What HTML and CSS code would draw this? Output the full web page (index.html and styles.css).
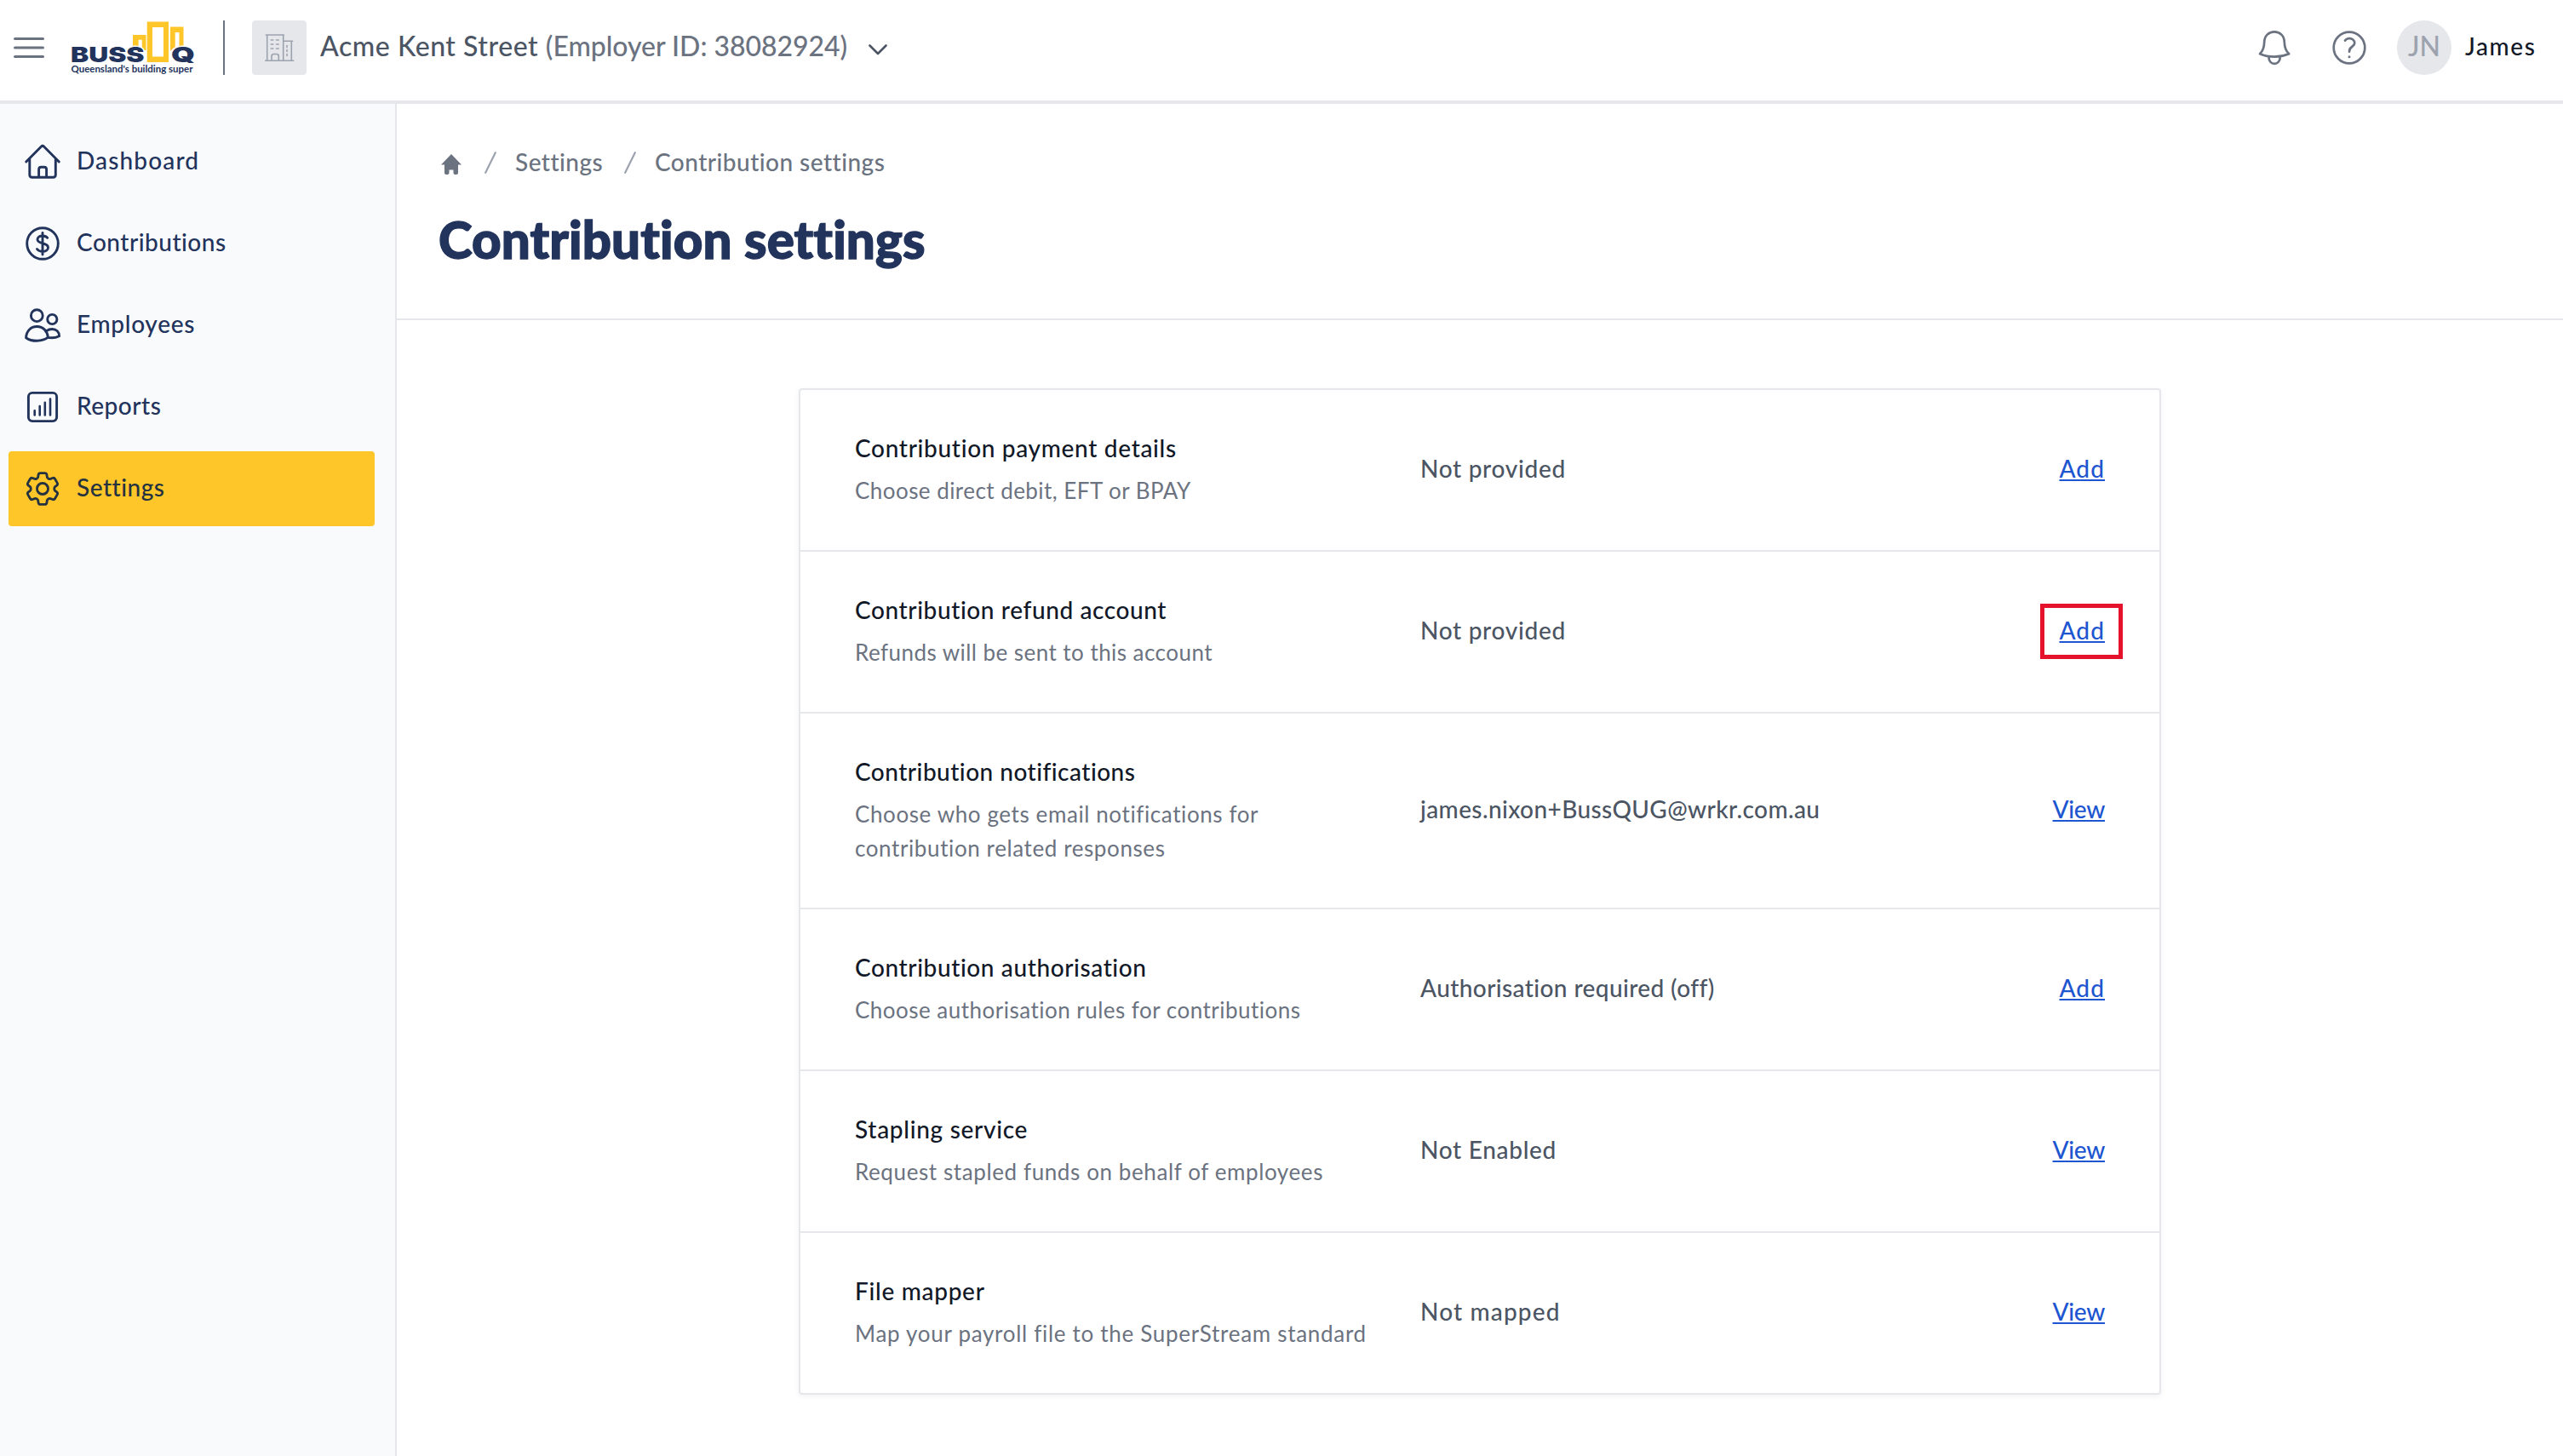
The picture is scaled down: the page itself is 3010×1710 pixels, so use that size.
FILE: index.html
```
<!DOCTYPE html>
<html lang="en">
<head>
<meta charset="utf-8">
<title>Contribution settings</title>
<link rel="stylesheet" href="styles.css">
</head>
<body>
<header class="topbar">
  <svg class="menu-icon" viewBox="0 0 36 24"><path d="M1.5 1.5h33M1.5 12h33M1.5 22.5h33"/></svg>
  <svg class="logo" viewBox="0 0 150 68" role="img" aria-label="BUSSQ">
    <path class="logo-gold" fill-rule="evenodd" d="M74 17h15.500v18h-4.700v-12.300h-4.200v12.300h-6.600zM118 7.500h15.500v28h-5v-21.500h-4.800v21.500h-5.700z"/>
    <path class="logo-gold" fill-rule="evenodd" d="M90.700 1.500h25.300v47.500h-25.300zM97 8v34.500h13v-34.500z"/>
    <text class="logo-name" x="1" y="48.500" textLength="86.500" lengthAdjust="spacingAndGlyphs">BUSS</text>
    <text class="logo-name" x="119" y="48.500" textLength="28" lengthAdjust="spacingAndGlyphs">Q</text>
    <text class="logo-tag" x="1.500" y="60.500" textLength="143" lengthAdjust="spacingAndGlyphs">Queensland's building super</text>
  </svg>
  <span class="divider"></span>
  <span class="company-icon">
    <svg viewBox="0 0 64 64"><path d="M16.300 17h21M17.700 17v30M36.700 17v30M36.700 24.300h11M46.300 24.300v22.700M15.700 47.200h33M23 47v-5q0-2.500 2.500-2.500h3.300q2.500 0 2.500 2.500v5"/><path class="windows" d="M22.200 23h2.600M28.600 23h2.600M22.200 28h2.600M28.600 28h2.600M22.200 33h2.600M28.600 33h2.600M41 29.500v2M41 34.500v2M41 39.500v2"/></svg>
  </span>
  <span class="company"><span class="company-name">Acme Kent Street</span> <span class="company-id">(Employer ID: 38082924)</span></span>
  <svg class="chevron" viewBox="0 0 22 13"><path d="M1.500 1.500l9.500 9.500 9.500-9.500"/></svg>
  <div class="tools">
    <svg class="tool" viewBox="0 0 48 48"><path d="M7 31.300Q12 26.500 12.200 17.500C12.300 10 17.500 5.400 24 5.400S35.700 10 35.800 17.500Q36 26.500 41.200 31.300Q33 34.700 24 34.700T7 31.300zM17.600 34.500V36.300A6.500 6.500 0 0 0 30.600 36.300V34.500"/></svg>
    <svg class="tool tool-help" viewBox="0 0 48 48"><circle cx="24" cy="24" r="18.300"/><path d="M19 15.600C21 12.800 25.500 12.200 28.300 14.500C31 16.800 30.800 20 28.300 21.900C25.500 24 24 25 24 28.700"/><circle class="dot" cx="24" cy="34.700" r="1.500"/></svg>
    <span class="avatar">JN</span>
    <span class="user">James</span>
  </div>
</header>
<div class="shell">
  <nav class="sidebar">
    <a class="nav-item"><svg viewBox="0 0 48 48"><path d="M4.700 24L22.300 6.200Q24 4.500 25.700 6.200L43.300 24M8.800 20.500V39.300Q8.800 42.300 11.800 42.300H36.300Q39.300 42.300 39.300 39.300V20.500M19.600 42V33Q19.600 30.200 22.400 30.200H25.800Q28.600 30.200 28.600 33V42"/></svg><span class="widest">Dashboard</span></a>
    <a class="nav-item"><svg viewBox="0 0 48 48"><circle cx="24" cy="24" r="18.300"/><path d="M24 11.500V37M29.700 17.300C28.500 15.600 26.500 15 24 15C20.500 15 18 16.700 18 19.300C18 25.200 30.500 22.300 30.500 28.700C30.500 31.500 27.800 33.300 24 33.300C21 33.300 18.800 32.300 17.500 30.500"/></svg><span>Contributions</span></a>
    <a class="nav-item"><svg viewBox="0 0 48 48"><circle cx="17.300" cy="12.700" r="6.900"/><circle cx="35.300" cy="17" r="5.600"/><path d="M4.600 38.700C4.900 31 10 25.500 17.300 25.500S29.800 31 30.400 38.200Q25 42.300 17.300 42.300T4.600 38.700zM28.600 30.700C30.500 29.300 32.800 28.500 35.300 28.500C40.200 28.500 43.600 32 43.600 36.700Q37.500 39.700 30.600 38.400"/></svg><span class="wide">Employees</span></a>
    <a class="nav-item"><svg viewBox="0 0 48 48"><rect x="7.400" y="7.400" width="33.200" height="33.200" rx="4.500"/><path class="bars" d="M14.700 28.300V33.500M20.700 23V33.500M26.800 18.800V33.500M33 14.600V33.500"/></svg><span>Reports</span></a>
    <a class="nav-item active"><svg viewBox="0 0 48 48"><g transform="translate(24 24) scale(2.040) translate(-12 -12)"><path class="cog" d="M9.594 3.940c.09-.542.56-.94 1.110-.94h2.593c.55 0 1.020.398 1.110.94l.213 1.281c.063.374.313.686.645.87.074.04.147.083.22.127.325.196.72.257 1.075.124l1.217-.456a1.125 1.125 0 0 1 1.370.49l1.296 2.247a1.125 1.125 0 0 1-.26 1.431l-1.003.827c-.293.241-.438.613-.43.992a7.723 7.723 0 0 1 0 .255c-.008.378.137.75.43.991l1.004.827c.424.35.534.955.26 1.430l-1.298 2.247a1.125 1.125 0 0 1-1.369.491l-1.217-.456c-.355-.133-.75-.072-1.076.124a6.470 6.470 0 0 1-.22.128c-.331.183-.581.495-.644.869l-.213 1.281c-.09.543-.56.94-1.110.94h-2.594c-.55 0-1.019-.398-1.110-.94l-.213-1.281c-.062-.374-.312-.686-.644-.87a6.520 6.520 0 0 1-.22-.127c-.325-.196-.72-.257-1.076-.124l-1.217.456a1.125 1.125 0 0 1-1.369-.49l-1.297-2.247a1.125 1.125 0 0 1 .26-1.431l1.004-.827c.292-.24.437-.613.43-.991a6.932 6.932 0 0 1 0-.255c.007-.38-.138-.751-.43-.992l-1.004-.827a1.125 1.125 0 0 1-.26-1.430l1.297-2.247a1.125 1.125 0 0 1 1.370-.491l1.216.456c.356.133.751.072 1.076-.124.072-.044.146-.086.22-.128.332-.183.582-.495.644-.869l.214-1.280Z"/><circle class="cog" cx="12" cy="12" r="3.200"/></g></svg><span>Settings</span></a>
  </nav>
  <main class="main">
    <div class="page-head">
      <div class="crumbs">
        <svg class="home" viewBox="0 0 24 24"><path d="M12 0L24 12.500H20V22Q20 24 18 24H16.500Q14.500 24 14.500 22V18.500H9.500V22Q9.500 24 7.500 24H6Q4 24 4 22V12.500H0z"/></svg>
        <svg class="slash" viewBox="0 0 14 26"><path d="M1.200 24.800L12.800 1.200"/></svg>
        <span class="crumb crumb-parent">Settings</span>
        <svg class="slash" viewBox="0 0 14 26"><path d="M1.200 24.800L12.800 1.200"/></svg>
        <span class="crumb">Contribution settings</span>
      </div>
      <h1 class="title">Contribution settings</h1>
    </div>
    <section class="card">
      <div class="row"><div class="info"><h2>Contribution payment details</h2><p>Choose direct debit, EFT or BPAY</p></div><div class="value wide">Not provided</div><a class="link link-add">Add</a></div>
      <div class="row"><div class="info"><h2 class="medium">Contribution refund account</h2><p>Refunds will be sent to this account</p></div><div class="value wide">Not provided</div><a class="link link-add highlighted">Add</a></div>
      <div class="row"><div class="info"><h2 class="snug">Contribution notifications</h2><p class="medium">Choose who gets email notifications for<br>contribution related responses</p></div><div class="value">james.nixon+BussQUG@wrkr.com.au</div><a class="link">View</a></div>
      <div class="row"><div class="info"><h2 class="medium">Contribution authorisation</h2><p class="snug">Choose authorisation rules for contributions</p></div><div class="value">Authorisation required (off)</div><a class="link link-add">Add</a></div>
      <div class="row"><div class="info"><h2 class="wide">Stapling service</h2><p class="medium">Request stapled funds on behalf of employees</p></div><div class="value wide">Not Enabled</div><a class="link">View</a></div>
      <div class="row"><div class="info"><h2 class="wide">File mapper</h2><p class="wide">Map your payroll file to the SuperStream standard</p></div><div class="value widest">Not mapped</div><a class="link">View</a></div>
    </section>
  </main>
</div>
</body>
</html>
```
FILE: styles.css
```
*, *::before, *::after { box-sizing: border-box; margin: 0; padding: 0; }
body {
  font-family: Lato, "Open Sans", sans-serif;
  font-size: 28px;
  font-weight: 500;
  letter-spacing: 0.5px;
  font-variant-ligatures: none;
  color: #111827;
  background: #fff;
  height: 1710px;
  display: flex;
  flex-direction: column;
  overflow: hidden;
}
svg { display: block; flex: none; fill: none; stroke-linecap: round; stroke-linejoin: round; }

/* Top bar */
.topbar { height: 122px; flex: none; border-bottom: 4px solid #e5e7eb; display: flex; align-items: flex-start; padding: 24px 31px 0 16px; white-space: nowrap; }
.menu-icon { width: 36px; height: 24px; margin-top: 20px; stroke: #6b7280; stroke-width: 3; }
.logo { width: 150px; height: 68px; margin-left: 30px; overflow: visible; }
.logo-gold { fill: #ffc629; }
.logo-name { font-family: Inter, sans-serif; font-weight: 900; font-size: 25px; fill: #22335c; stroke: #fff; stroke-width: 3; paint-order: stroke; letter-spacing: 0; }
.logo-tag { font-weight: 700; font-size: 11px; fill: #22335c; letter-spacing: 0; }
.divider { width: 2px; height: 64px; background: #6b7280; margin-left: 30px; }
.company-icon { width: 64px; height: 64px; border-radius: 4px; background: #e5e7eb; margin-left: 32px; }
.company-icon svg { stroke: #9ca3af; stroke-width: 1.6; }
.company { width: 619px; margin-left: 16px; font-size: 32px; line-height: 59px; color: #4b5563; letter-spacing: 0.55px; }
.company-id { color: #6b7280; letter-spacing: -0.04px; }
.chevron { width: 22px; height: 13px; margin: 28px 0 0 25px; stroke: #4b5563; stroke-width: 2.6; }
.tools { margin-left: auto; display: flex; align-items: center; height: 64px; }
.tool { width: 48px; height: 48px; stroke: #6b7280; stroke-width: 2.7; }
.tool-help { margin-left: 40px; }
.tool .dot { fill: #6b7280; stroke: none; }
.avatar { width: 64px; height: 64px; border-radius: 50%; margin-left: 32px; background: #e5e7eb; color: #9ca3af; font-size: 32px; line-height: 59px; text-align: center; letter-spacing: 0; }
.user { width: 84px; margin-left: 16px; line-height: 40px; padding-bottom: 5px; letter-spacing: 1.6px; }

/* Sidebar */
.shell { flex: 1; display: flex; }
.sidebar { width: 466px; flex: none; background: #f9fafc; border-right: 2px solid #e5e7eb; padding: 24px 24px 0 10px; display: flex; flex-direction: column; gap: 8px; }
.nav-item { height: 88px; border-radius: 4px; display: flex; align-items: center; gap: 16px; padding-left: 16px; color: #22335c; }
.nav-item svg { width: 48px; height: 48px; stroke: currentColor; stroke-width: 2.9; }
.nav-item .bars { stroke-width: 2.6; }
.nav-item .cog { stroke-width: 1.4; }
.nav-item span { padding-bottom: 5px; }
.active { background: #ffc629; color: #25323f; }

/* Page heading */
.main { flex: 1; }
.page-head { height: 254px; padding: 48px 0 0 49px; border-bottom: 2px solid #e5e7eb; }
.crumbs { display: flex; align-items: center; height: 40px; line-height: 40px; color: #6b7280; letter-spacing: 0.47px; }
.home { width: 24px; height: 24px; fill: #6b7280; margin: 5px 27px 0 3px; }
.slash { width: 14px; height: 26px; margin-top: 2px; stroke: #9ca3af; stroke-width: 2.2; }
.crumb { margin-left: 22px; }
.crumb-parent { width: 128px; }
.title { margin-top: 35px; font-size: 60px; line-height: 72px; font-weight: 900; color: #22335c; letter-spacing: 0.12px; -webkit-text-stroke: 1.4px #22335c; }

/* Settings card */
.card { width: 1600px; margin: 80px auto 0; border: 2px solid #e5e7eb; border-radius: 4px; box-shadow: 0 2px 6px rgba(0, 0, 0, .06); }
.row { display: flex; align-items: center; padding: 48px 64px 50px; }
.row + .row { border-top: 2px solid #e5e7eb; }
.info { width: 664px; }
.info h2 { font-size: 28px; line-height: 40px; font-weight: 500; letter-spacing: 0.68px; }
.info p { margin-top: 10px; font-size: 26px; line-height: 40px; font-weight: 400; color: #6b7280; letter-spacing: 0.45px; }
.value { flex: 1; color: #4b5563; line-height: 40px; letter-spacing: 0.4px; margin-top: -2px; }
.link { position: relative; color: #1d56d0; text-decoration: underline; text-decoration-thickness: 2px; text-underline-offset: 2px; line-height: 40px; letter-spacing: -0.3px; margin-top: -2px; }
.link-add { letter-spacing: 1.1px; }
.highlighted::after { content: ""; position: absolute; left: -22px; right: -21px; top: -11px; height: 65px; border: 5px solid #e4122b; }

/* Tracking */
.info .snug { letter-spacing: 0.48px; }
.info .medium { letter-spacing: 0.6px; }
.wide, .info .wide { letter-spacing: 0.7px; }
.widest { letter-spacing: 1.15px; }
```
